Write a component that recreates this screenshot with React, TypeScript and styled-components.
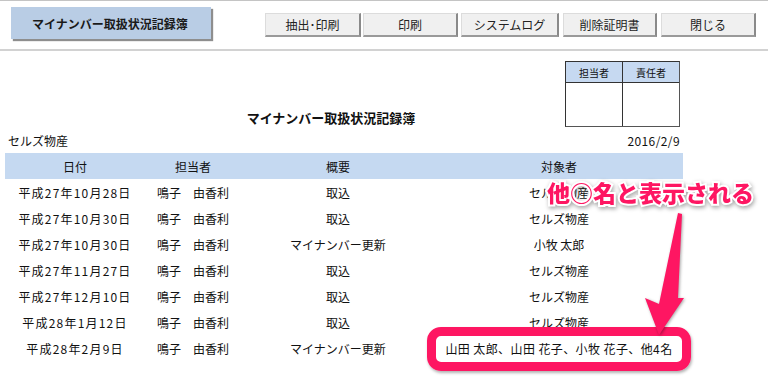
import React from "react";
import styled, { createGlobalStyle } from "styled-components";

const Global = createGlobalStyle`
  html, body { margin: 0; padding: 0; background: #fff; }
  body {
    width: 768px; height: 389px; overflow: hidden;
    font-family: "Noto Sans CJK JP", "Noto Sans", sans-serif;
    color: #111;
  }
`;

const Page = styled.div`
  position: relative;
  width: 768px;
  height: 389px;
  display: flex;
  flex-direction: column;
`;

const Toolbar = styled.div`
  height: 48px;
  border-top: 1px solid #c4c4c4;
  border-bottom: 2px solid #d2d2d2;
  display: flex;
  align-items: flex-start;
  padding: 0 0 0 11px;
`;

const Badge = styled.div`
  margin-top: 6px;
  width: 200px;
  height: 32px;
  background: #b9cde5;
  box-shadow: 2px 2px 1px #8e8e8e;
  display: flex;
  align-items: center;
  justify-content: center;
  font-size: 12px;
  font-weight: bold;
  color: #1a1a1a;
  padding-right: 2px;
  box-sizing: border-box;
`;

const Buttons = styled.div`
  display: flex;
  gap: 2px;
  margin-left: 54px;
  margin-top: 12px;
`;

const Button = styled.button<{ $w: number; $gap?: number }>`
  width: ${(p) => p.$w}px;
  height: 24px;
  margin-left: ${(p) => p.$gap ?? 0}px;
  padding: 0;
  background: #f0f0f0;
  border: 1px solid #dcdcdc;
  border-right: 2px solid #8a8a8a;
  border-bottom: 2px solid #9a9a9a;
  font-family: "Noto Sans CJK JP", sans-serif;
  font-size: 12px;
  color: #222;
  line-height: 1;
`;

const Report = styled.div`
  position: relative;
  width: 678px;
  margin-left: 5px;
  display: flex;
  flex-direction: column;
`;

const TopSection = styled.div`
  display: flex;
  align-items: flex-end;
  padding-top: 10px;
  padding-right: 3px;
`;

const Title = styled.div`
  flex: 1;
  text-align: center;
  padding-left: 92px;
  font-size: 13px;
  font-weight: bold;
  line-height: 16px;
  padding-bottom: 1px;
  color: #111;
`;

const Approval = styled.div`
  display: grid;
  grid-template-columns: 57px 56px;
  grid-template-rows: 21px 43px;
  border: 1px solid #333;
  border-right: 1px solid #555;
  border-bottom: 1px solid #555;
`;

const ApprovalHead = styled.div<{ $first?: boolean }>`
  background: #c6d9f1;
  border-bottom: 1px solid #333;
  border-right: ${(p) => (p.$first ? "1px solid #333" : "none")};
  font-size: 10px;
  display: flex;
  align-items: center;
  justify-content: center;
`;

const ApprovalCell = styled.div<{ $first?: boolean }>`
  border-right: ${(p) => (p.$first ? "1px solid #333" : "none")};
`;

const InfoRow = styled.div`
  display: flex;
  justify-content: space-between;
  padding: 6px 3px 4px 3px;
  font-size: 12px;
  line-height: 16px;
`;

const DateText = styled.span`
  letter-spacing: 0.4px;
`;

const Row = styled.div<{ $head?: boolean }>`
  display: grid;
  grid-template-columns: 140px 96px 194px 248px;
  height: 26px;
  align-items: center;
  background: ${(p) => (p.$head ? "#c5d9f1" : "transparent")};
  font-size: 12px;
`;

const Cell = styled.div<{ $spacing?: number }>`
  text-align: center;
  white-space: nowrap;
  letter-spacing: ${(p) => p.$spacing ?? 0}px;
`;

const Highlight = styled.div`
  position: absolute;
  left: 422px;
  top: 276px;
  width: 246px;
  height: 26px;
  border: 9px solid #fe1662;
  border-radius: 14px;
  box-shadow: 1px 2px 3px rgba(0, 0, 0, 0.3);
`;

const Callout = styled.div`
  position: absolute;
  left: 542px;
  top: 126px;
  font-size: 23px;
  font-weight: 900;
  line-height: 30px;
  color: #fe1662;
  white-space: nowrap;
  -webkit-text-stroke: 4px #fff;
  paint-order: stroke fill;
  filter: drop-shadow(1px 2px 2px rgba(0, 0, 0, 0.35));
`;

const Arrow = styled.svg`
  position: absolute;
  left: 627px;
  top: 160px;
  filter: drop-shadow(1px 1px 1.5px rgba(0, 0, 0, 0.35));
`;

const rows = [
  ["平成27年10月28日", "鳴子　由香利", "取込", "セルズ物産"],
  ["平成27年10月30日", "鳴子　由香利", "取込", "セルズ物産"],
  ["平成27年10月30日", "鳴子　由香利", "マイナンバー更新", "小牧 太郎"],
  ["平成27年11月27日", "鳴子　由香利", "取込", "セルズ物産"],
  ["平成27年12月10日", "鳴子　由香利", "取込", "セルズ物産"],
  ["平成28年1月12日", "鳴子　由香利", "取込", "セルズ物産"],
  ["平成28年2月9日", "鳴子　由香利", "マイナンバー更新", "山田 太郎、山田 花子、小牧 花子、他4名"],
];

export default function App() {
  return (
    <Page>
      <Global />
      <Toolbar>
        <Badge>マイナンバー取扱状況記録簿</Badge>
        <Buttons>
          <Button $w={96}>抽出･印刷</Button>
          <Button $w={95}>印刷</Button>
          <Button $w={98} $gap={1}>システムログ</Button>
          <Button $w={94} $gap={2}>削除証明書</Button>
          <Button $w={95} $gap={2}>閉じる</Button>
        </Buttons>
      </Toolbar>
      <Report>
        <TopSection>
          <Title>マイナンバー取扱状況記録簿</Title>
          <Approval>
            <ApprovalHead $first>担当者</ApprovalHead>
            <ApprovalHead>責任者</ApprovalHead>
            <ApprovalCell $first />
            <ApprovalCell />
          </Approval>
        </TopSection>
        <InfoRow>
          <span>セルズ物産</span>
          <DateText>2016/2/9</DateText>
        </InfoRow>
        <Row $head>
          <Cell>日付</Cell>
          <Cell>担当者</Cell>
          <Cell>概要</Cell>
          <Cell>対象者</Cell>
        </Row>
        {rows.map((r, i) => (
          <Row key={i}>
            <Cell $spacing={1.2}>{r[0]}</Cell>
            <Cell>{r[1]}</Cell>
            <Cell>{r[2]}</Cell>
            <Cell $spacing={i === rows.length - 1 ? 0.4 : 0}>{r[3]}</Cell>
          </Row>
        ))}
        <Highlight />
        <Callout>他○名と表示される</Callout>
        <Arrow width="60" height="125" viewBox="0 0 60 125">
          <polygon points="46,2 50,3 46,87 52,87 27,124 13,87 27,93" fill="#fe1662" />
        </Arrow>
      </Report>
    </Page>
  );
}
